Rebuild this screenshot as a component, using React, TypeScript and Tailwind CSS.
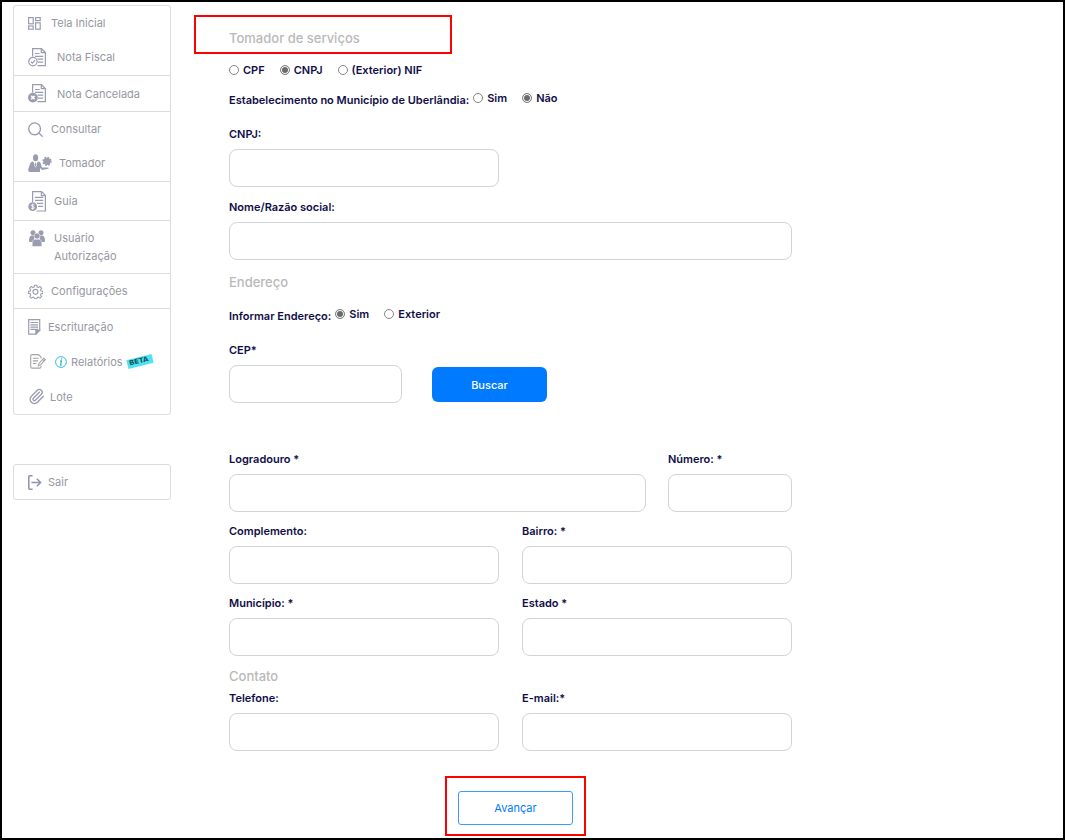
import { useId, type ReactNode } from "react";
import { Paperclip } from "lucide-react";

const C = "#9a9db0";

function GridIcon() {
  return (
    <svg width="13" height="13" viewBox="0 0 13 13" fill="none" stroke={C} strokeWidth="1.2">
      <rect x="0.6" y="0.6" width="4.6" height="6.2" />
      <rect x="7.6" y="0.6" width="4.6" height="3" />
      <rect x="0.6" y="9" width="4.6" height="3.2" />
      <rect x="7.6" y="5.8" width="4.6" height="6.4" />
    </svg>
  );
}

function DocumentIcon({ badge }: { badge: "check" | "cross" }) {
  return (
    <svg width="18" height="19" viewBox="0 0 18 19" fill="none" stroke={C} strokeWidth="1.2">
      <path d="M4.6 8.5V0.7h8.900l3.900 3.800V17.600H9.500" />
      <path d="M13.3 0.8v3.800h4" />
      <path d="M7 5.500h4.500M7 8.300h8.200M9.500 11.200h5.700M10 14.100h5.200" />
      {badge === "check" ? (
        <>
          <circle cx="4.9" cy="13.6" r="4.2" fill="#fff" />
          <path d="M2.9 13.7l1.5 1.5 2.6-3" />
        </>
      ) : (
        <>
          <circle cx="4.9" cy="13.6" r="4.3" fill={C} />
          <path d="M3.2 11.9l3.4 3.4M6.6 11.9l-3.4 3.4" stroke="#fff" strokeWidth="1.5" />
        </>
      )}
    </svg>
  );
}

function SearchIcon() {
  return (
    <svg width="15" height="15" viewBox="0 0 15 15" fill="none" stroke={C} strokeWidth="1.4">
      <circle cx="6.6" cy="6.8" r="5.9" />
      <path d="M10.9 11l3.3 3.3" strokeLinecap="round" />
    </svg>
  );
}

function ManagerIcon() {
  return (
    <svg className="shrink-0" width="24" height="19" viewBox="0 0 24 19" fill={C}>
      <ellipse cx="7.6" cy="3.7" rx="2.6" ry="3.5" />
      <path d="M5 7.2L7.5 12 10.1 7.2 12.4 8.4 14 13.6 20.4 13.4 20.6 14.8 14 16 12 14V18H1.6C0.2 17.5 0 16.5 0.3 15L2.2 9.4C2.6 8.3 3.6 7.9 5 7.2z" />
      <path d="M7 8h1.2l0.7 3.4-1.3 2.2-1.3-2.2z" fill="#fff" />
      <path d="M7.2 8.4h0.8l0.4 3-0.8 1.4-0.8-1.4z" />
      <circle cx="19" cy="7.3" r="3.6" />
      <circle cx="19" cy="7.3" r="3.9" fill="none" stroke={C} strokeWidth="1.5" strokeDasharray="1.7 1.36" />
    </svg>
  );
}

function InvoiceIcon() {
  return (
    <svg width="18" height="21" viewBox="0 0 18 21" fill="none" stroke={C} strokeWidth="1.2">
      <path d="M4.6 11V0.7h9l3.8 3.8V20H8.5" />
      <path d="M13.4 0.8v3.9h3.9" />
      <path d="M7 6.3h8.2M7 9.3h8.2M9 12.4h6.2M10 15.4h5.2" />
      <circle cx="4.7" cy="15.7" r="4.4" fill={C} stroke="none" />
      <path d="M6.3 14.1c-.8-.9-3-.8-3 .3 0 1.4 3 .9 3 2.4 0 1.2-2.3 1.3-3.2.3M4.7 12.7v6" stroke="#fff" strokeWidth="0.9" />
    </svg>
  );
}

function UsersIcon() {
  return (
    <svg width="16" height="17" viewBox="0 0 16 17" fill={C}>
      <circle cx="4" cy="2.8" r="2.5" />
      <circle cx="12" cy="2.8" r="2.5" />
      <path d="M0 10.5C0 7 1.4 5.4 3 5.4h2.4L5 12H0.3zM16 10.500C16 7 14.6 5.4 13 5.4h-2.4L11 12h4.7z" />
      <circle cx="8" cy="6" r="3" stroke="#fff" strokeWidth="0.5" />
      <path d="M3.200 16.500v-3.300c0-2.700 1.700-4 3.300-4h3c1.600 0 3.300 1.300 3.300 4v3.300z" stroke="#fff" strokeWidth="0.5" />
    </svg>
  );
}

function GearIcon() {
  return (
    <svg width="15" height="15" viewBox="0 0 24 24" fill="none" stroke={C} strokeWidth="1.8" strokeLinejoin="round">
      <path d="M10 1.5h4l.6 3.2 2 .9 2.7-1.9 2.9 2.9-1.9 2.7.9 2 3.2.6v4l-3.2.2-.9 2 1.9 2.6-2.9 2.9-2.7-1.9-2 .8-.6 2h-4l-.6-2-2-.8-2.7 1.9-2.9-2.9 1.9-2.6-.9-2L-.4 15v-3l3.2-.7.9-2-1.9-2.7 2.9-2.9 2.7 1.9 2-.9z" transform="translate(0.9 0.5) scale(0.94)" />
      <circle cx="12" cy="12.5" r="4" />
    </svg>
  );
}

function NotesIcon() {
  return (
    <svg className="shrink-0" width="13" height="16" viewBox="0 0 13 16" fill="none" stroke={C} strokeWidth="1.2">
      <path d="M0.7 0.7h11v10.6l-3.8 3.8H0.7z" />
      <path d="M2.4 3.5h7.7M2.4 5.8h7.7M2.4 8.1h7.7M2.4 10.4h7.7" />
      <path d="M11.6 11.3H7.9V15z" fill={C} />
    </svg>
  );
}

function EditIcon() {
  return (
    <svg width="16" height="15" viewBox="0 0 16 15" fill="none" stroke="#a3a3a3" strokeWidth="1.1">
      <path d="M11 4.4V3L8.6.6H2.2C1.2.6.7 1.1.7 2v10.7c0 .9.5 1.4 1.5 1.4h7.3c1 0 1.5-.5 1.5-1.4v-.9" />
      <path d="M2.9 4.3h5.8M2.9 6.9h5.2M2.9 9.5h3.4" />
      <path d="M8.3 11.9l.7-2.5 4.7-5.2 1.6 1.5-4.7 5.2zM12.6 5.4l1.6 1.5" />
    </svg>
  );
}

function ExitIcon() {
  return (
    <svg className="shrink-0" width="14" height="15" viewBox="0 0 14 15" fill="none" stroke="#8f93ab" strokeWidth="1.5">
      <path d="M4.600 0.800H1.700Q0.800 0.800 0.800 1.700v11.600Q0.800 14.200 1.700 14.200h2.900" />
      <path d="M3.400 7.500h9.200M8.800 3.700l3.800 3.800-3.800 3.800" />
    </svg>
  );
}

function InfoIcon() {
  return (
    <svg width="12" height="12" viewBox="0 0 12 12" fill="none" stroke="#35b8dc">
      <circle cx="6" cy="6" r="5.4" />
      <path d="M5.200 5h1.200l-.8 4h1" strokeWidth="1.3" />
      <circle cx="6.7" cy="2.9" r="0.4" strokeWidth="0.9" />
    </svg>
  );
}

function NavItem({ icon, box, height = "h-[34px]", children }: { icon: ReactNode; box: string; height?: string; children: ReactNode }) {
  return (
    <a href="#" className={`flex items-center gap-2 pl-[14px] ${height}`}>
      <span className={`flex shrink-0 ${box}`}>{icon}</span>
      <span className="flex items-center">{children}</span>
    </a>
  );
}

function Sidebar() {
  return (
    <nav className="w-[158px] shrink-0 text-[11px] leading-[18px] text-[#96979f]">
      <div className="divide-y divide-[#dcdcdc] rounded-[3px] border border-[#dcdcdc]">
        <div className="pb-px">
          <NavItem icon={<GridIcon />} box="w-[15px]">Tela Inicial</NavItem>
          <NavItem icon={<DocumentIcon badge="check" />} box="w-[21px]">Nota Fiscal</NavItem>
        </div>
        <NavItem icon={<DocumentIcon badge="cross" />} box="w-[21px]" height="h-[36px]">Nota Cancelada</NavItem>
        <div className="pb-px">
          <NavItem icon={<SearchIcon />} box="w-[15px]">Consultar</NavItem>
          <NavItem icon={<ManagerIcon />} box="w-[23px]">Tomador</NavItem>
        </div>
        <NavItem icon={<InvoiceIcon />} box="w-[18px]" height="h-[39px]">Guia</NavItem>
        <a href="#" className="flex items-start gap-2 py-2 pl-[14px]">
          <span className="flex w-[18px] shrink-0 justify-center pt-px"><UsersIcon /></span>
          <span>Usuário<br />Autorização</span>
        </a>
        <NavItem icon={<GearIcon />} box="w-[15px]" height="h-[35px]">Configurações</NavItem>
        <div>
          <NavItem icon={<NotesIcon />} box="w-[12px]" height="h-[35px]">Escrituração</NavItem>
          <NavItem icon={<EditIcon />} box="w-[19px] pl-[2px]" height="h-[35px]">
            <InfoIcon />
            <span className="ml-1">Relatórios</span>
            <span className="ml-1 flex h-[9px] w-[26px] -rotate-[14deg] items-center justify-between bg-[#4fe3f2] px-[2px] font-['DejaVu_Sans',sans-serif] text-[7px] leading-none font-bold text-[#14555e]">BETA</span>
          </NavItem>
          <NavItem icon={<Paperclip size={17} color={C} strokeWidth={1.9} className="shrink-0" />} box="w-[14px]" height="h-[35px]">Lote</NavItem>
        </div>
      </div>
      <div className="mt-[49px] rounded-[3px] border border-[#dcdcdc]">
        <NavItem icon={<ExitIcon />} box="w-[12px]">Sair</NavItem>
      </div>
    </nav>
  );
}

function Field({ label, type = "text" }: { label: string; type?: string }) {
  const id = useId();
  return (
    <div className="flex min-w-0 flex-col gap-[7px]">
      <label htmlFor={id} className="leading-4">{label}</label>
      <input id={id} type={type} className="h-[38px] w-full rounded-lg border border-[#ced4da] bg-white px-3 font-normal outline-none focus:border-[#007bff]" />
    </div>
  );
}

function Radio({ name, label, checked }: { name: string; label: string; checked?: boolean }) {
  return (
    <label className="flex items-center gap-1 leading-4">
      <input
        type="radio"
        name={name}
        defaultChecked={checked}
        className="h-[10px] w-[10px] appearance-none rounded-full border border-[#858585] bg-white checked:bg-[#6b6b6b] checked:shadow-[inset_0_0_0_1px_#fff]"
      />
      {label}
    </label>
  );
}

function SectionTitle({ children }: { children: ReactNode }) {
  return <h2 className="text-[13px] leading-5 font-medium text-[#b9b9b9]">{children}</h2>;
}

export default function App() {
  return (
    <div className="flex min-h-screen items-start border-2 border-black bg-white pt-[3px] pr-4 pb-[2px] pl-[11px] font-['Inter',sans-serif]">
      <Sidebar />
      <main className="ml-[23px] min-w-0 flex-1 pt-[10px] text-[11px] font-semibold text-[#100e48]">
        <div className="max-w-[258px] border-2 border-[#ff0000] pt-[11px] pb-1 pl-[33px]">
          <SectionTitle>Tomador de serviços</SectionTitle>
        </div>
        <form className="ml-[35px] max-w-[563px]" onSubmit={(e) => e.preventDefault()}>
          <div role="radiogroup" aria-label="Documento" className="mt-2 flex gap-[15px]">
            <Radio name="documento" label="CPF" />
            <Radio name="documento" label="CNPJ" checked />
            <Radio name="documento" label="(Exterior) NIF" />
          </div>
          <div role="radiogroup" aria-labelledby="estabelecimento" className="mt-3 flex items-start gap-1">
            <span id="estabelecimento" className="leading-5">Estabelecimento no Município de Uberlândia:</span>
            <div className="flex gap-[15px]">
              <Radio name="estabelecimento" label="Sim" />
              <Radio name="estabelecimento" label="Não" checked />
            </div>
          </div>
          <div className="mt-4 grid grid-cols-2 gap-x-[23px]">
            <Field label="CNPJ:" />
          </div>
          <div className="mt-3">
            <Field label="Nome/Razão social:" />
          </div>

          <div className="mt-3">
            <SectionTitle>Endereço</SectionTitle>
          </div>
          <div role="radiogroup" aria-labelledby="informar" className="mt-[14px] flex items-start gap-1">
            <span id="informar" className="leading-5">Informar Endereço:</span>
            <div className="flex gap-[15px]">
              <Radio name="endereco" label="Sim" checked />
              <Radio name="endereco" label="Exterior" />
            </div>
          </div>
          <div className="mt-4 flex items-end gap-[30px]">
            <div className="w-[173px]">
              <Field label="CEP*" />
            </div>
            <button type="button" className="mb-px h-[35px] w-[115px] rounded-md bg-[#007bff] pt-[2px] font-medium text-white">Buscar</button>
          </div>

          <div className="mt-12 grid grid-cols-[1fr_124px] gap-x-[22px]">
            <Field label="Logradouro *" />
            <Field label="Número: *" />
          </div>
          <div className="mt-[11px] grid grid-cols-2 gap-x-[23px] gap-y-[11px]">
            <Field label="Complemento:" />
            <Field label="Bairro: *" />
            <Field label="Município: *" />
            <Field label="Estado *" />
          </div>

          <div className="mt-[10px]">
            <SectionTitle>Contato</SectionTitle>
          </div>
          <div className="mt-1 grid grid-cols-2 gap-x-[23px]">
            <Field label="Telefone:" type="tel" />
            <Field label="E-mail:*" type="email" />
          </div>

          <div className="mt-[25px] flex justify-center pl-[10px]">
            <div className="border-2 border-[#ff0000] px-[11px] pt-[13px] pb-[9px]">
              <button type="submit" className="block h-[34px] w-[115px] rounded-[3px] border border-[#3d9aff] font-normal text-[#007bff]">Avançar</button>
            </div>
          </div>
        </form>
      </main>
    </div>
  );
}
